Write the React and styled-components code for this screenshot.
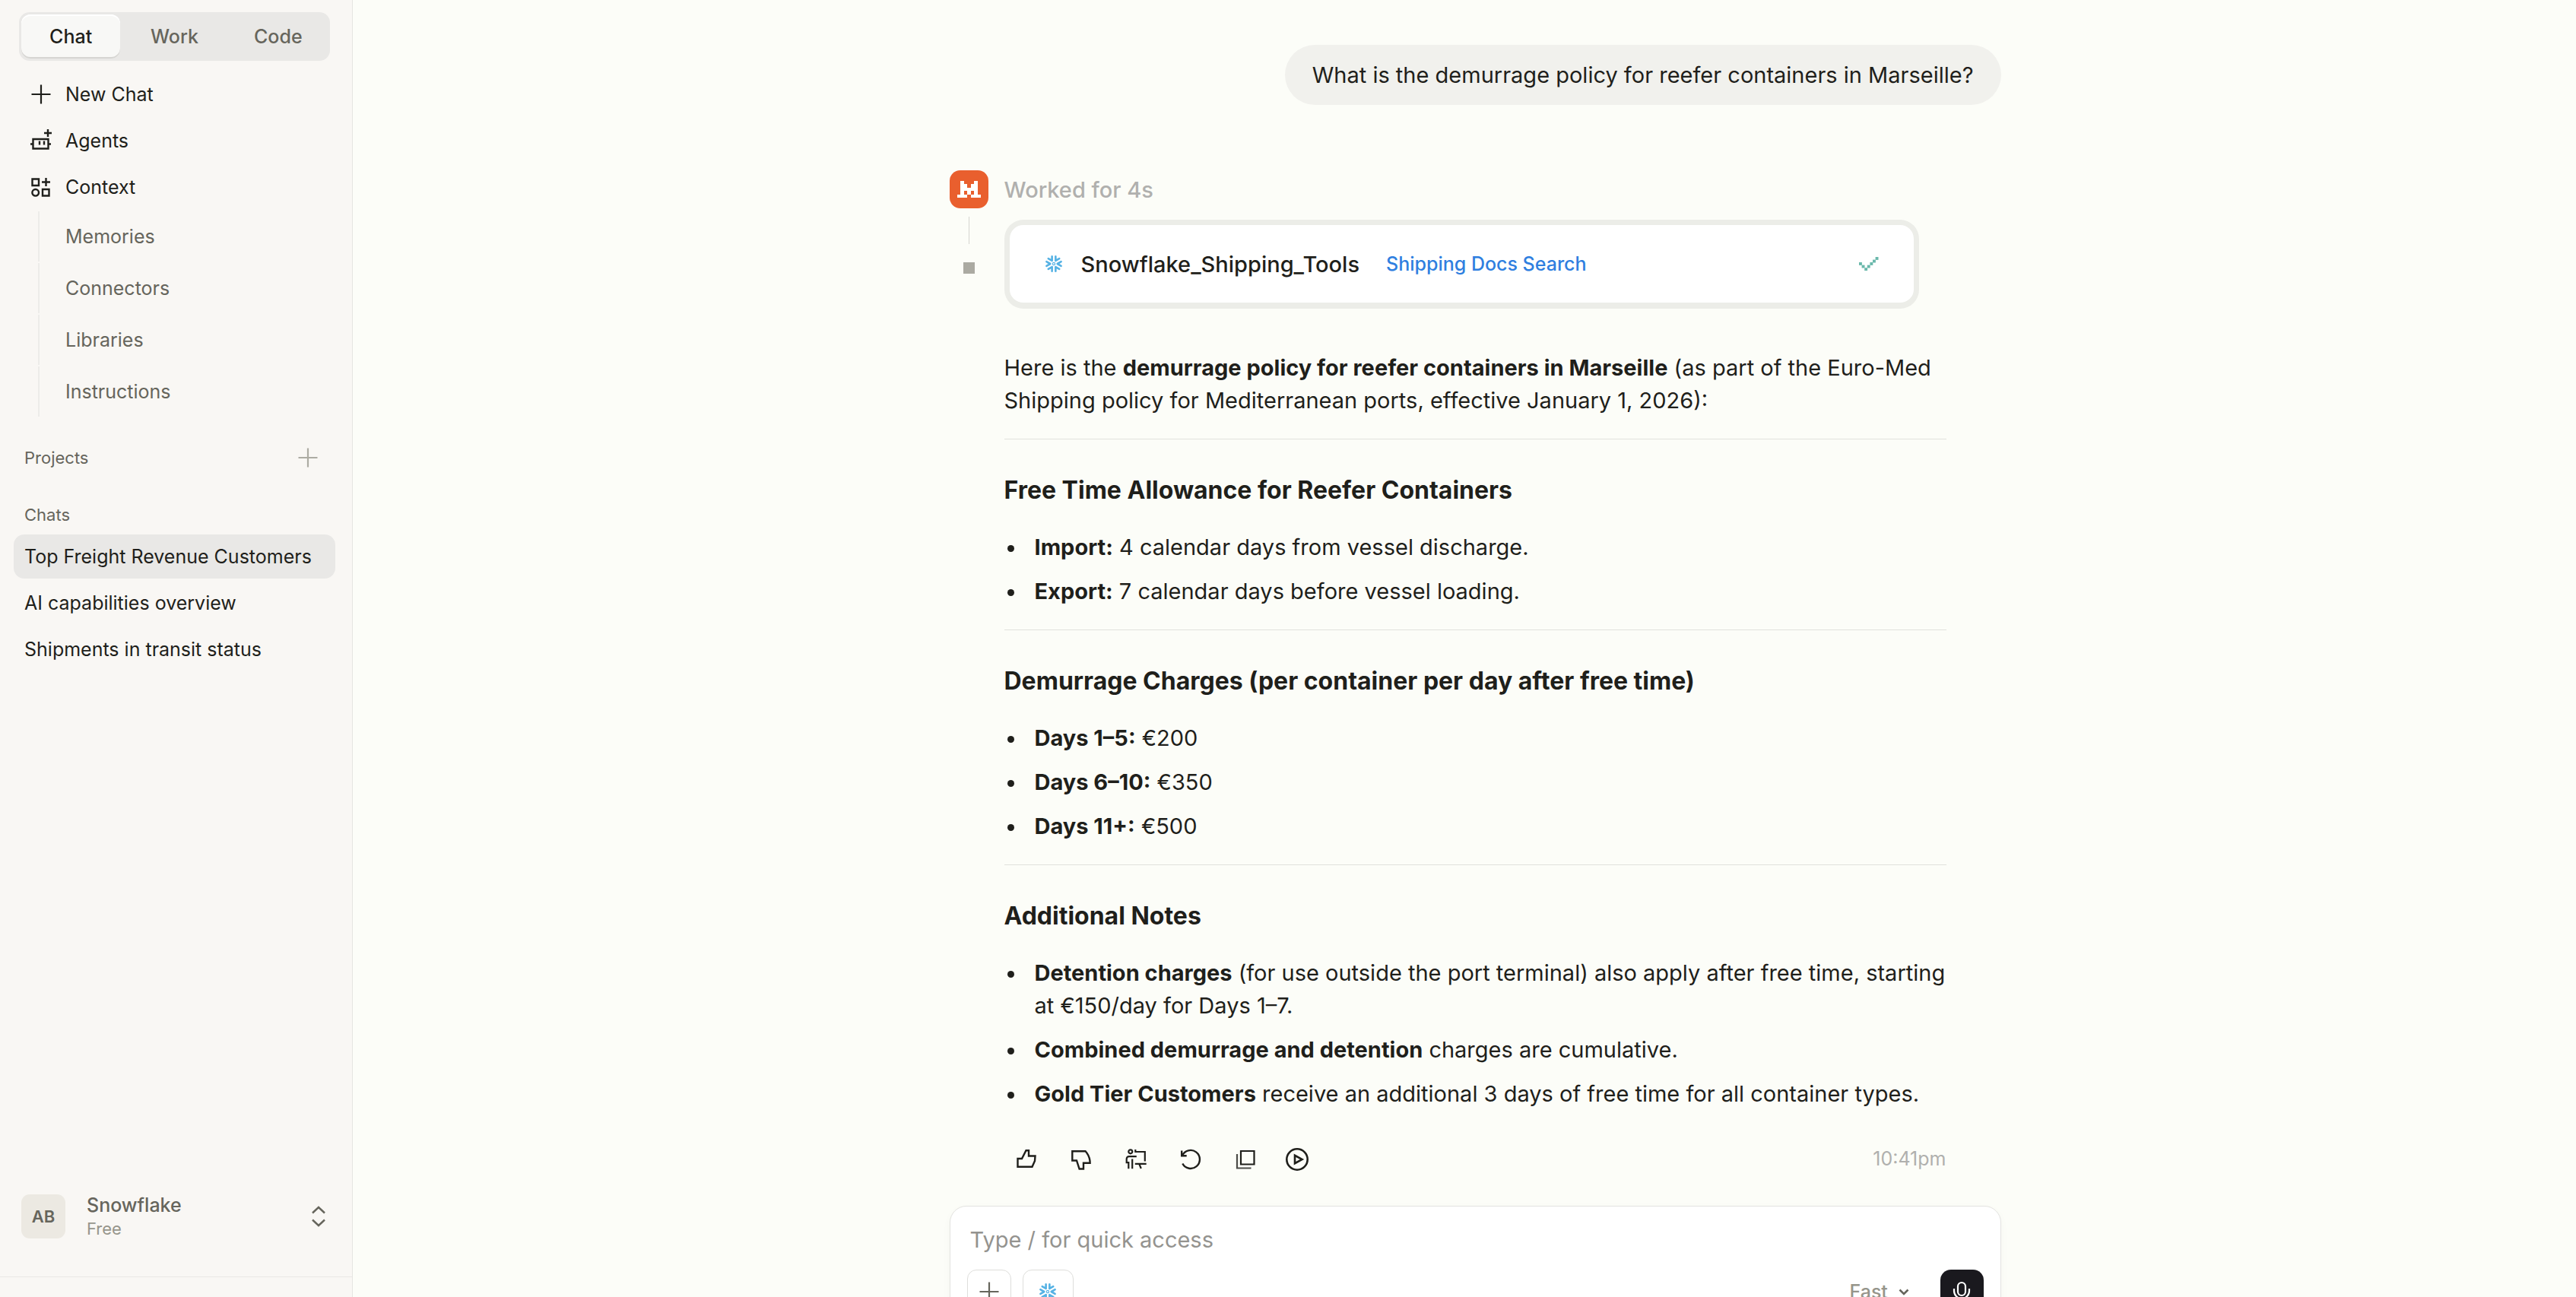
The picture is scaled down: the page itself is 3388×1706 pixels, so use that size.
import React from 'react'
import styled, { createGlobalStyle } from 'styled-components'

const GlobalStyle = createGlobalStyle`
    * {
        box-sizing: border-box;
    }
    body {
        margin: 0;
        background: #fcfdf8;
        font-family: Inter, "Liberation Sans", sans-serif;
        font-optical-sizing: none;
        color: #1f1f1b;
        overflow: hidden;
        -webkit-font-smoothing: antialiased;
    }
    button, input, select {
        font: inherit;
        color: inherit;
        font-optical-sizing: inherit;
    }
    button {
        border: 0;
        padding: 0;
        background: none;
        cursor: pointer;
    }
    a {
        color: inherit;
        text-decoration: none;
    }
`

const Page = styled.div`
    display: flex;
    height: 100vh;
    overflow: hidden;
`

/* ---------- sidebar ---------- */

const Sidebar = styled.aside`
    width: 464px;
    flex-shrink: 0;
    display: flex;
    flex-direction: column;
    background: #f9f7f4;
    border-right: 1px solid #e6e5e2;
    font-size: 25px;
    line-height: 36px;
`

const Modes = styled.div`
    display: grid;
    grid-template-columns: repeat(3, 1fr);
    gap: 6px;
    height: 64px;
    margin: 16px 29px 0 25px;
    padding: 3px;
    border-radius: 14px;
    background: #e9e8e6;
`

const Mode = styled.button`
    border-radius: 12px;
    font-weight: 500;
    color: ${({ $active }) => ($active ? '#1f1f1b' : '#66655c')};
    background: ${({ $active }) => ($active ? '#f8f8f6' : 'transparent')};
    box-shadow: ${({ $active }) => ($active ? 'inset 0 2px 0 #ffffff, inset 0 -2px 0 #d6d5d2' : 'none')};
`

const Nav = styled.nav`
    display: flex;
    flex-direction: column;
    gap: 3px;
    padding: 15px 22px 0 18px;
`

const NavItem = styled.a`
    display: flex;
    align-items: center;
    height: 58px;
    padding: 0 14px;
    border-radius: 14px;
    background: ${({ $active }) => ($active ? '#e9e8e6' : 'transparent')};
    white-space: nowrap;
    svg {
        margin: 0 14px 0 4px;
    }
`

const SubNav = styled.div`
    display: flex;
    flex-direction: column;
    gap: 2px;
    padding: 3px 22px 0 50px;
`

const SubItem = styled.a`
    display: flex;
    align-items: center;
    height: 66px;
    padding-left: 34px;
    border-left: 2px solid #edece9;
    color: #66655c;
`

const SectionTitle = styled.div`
    display: flex;
    align-items: center;
    justify-content: space-between;
    height: 36px;
    margin-top: ${({ $top }) => $top}px;
    padding: 0 40px 0 32px;
    font-size: 22px;
    color: #66655c;
    button {
        display: flex;
        color: #adaca3;
    }
`

const ChatList = styled(Nav)`
    padding-top: 8px;
`

const Account = styled.button`
    display: flex;
    align-items: center;
    gap: 28px;
    margin-top: auto;
    padding: 0 28px 48px 28px;
    text-align: left;
    color: #66655c;
    svg {
        margin-left: auto;
    }
`

const Avatar = styled.span`
    display: grid;
    place-items: center;
    width: 58px;
    height: 58px;
    border-radius: 11px;
    background: #ece9e2;
    font-size: 22px;
    font-weight: 600;
`

const AccountText = styled.span`
    display: flex;
    flex-direction: column;
    font-weight: 500;
    line-height: 32px;
    small {
        font-size: 22px;
        font-weight: 400;
        line-height: 30px;
        color: #96958b;
    }
`

const SidebarFoot = styled.div`
    height: 27px;
    border-top: 1px solid #e9e8e5;
`

/* ---------- conversation ---------- */

const Main = styled.main`
    flex: 1;
    display: flex;
    justify-content: center;
    padding-left: 28px;
    font-size: 29px;
    line-height: 43px;
`

const Column = styled.div`
    width: 1383px;
    display: flex;
    flex-direction: column;
`

const Question = styled.p`
    align-self: flex-end;
    margin: 59px 0 0;
    padding: 18px 36px;
    border-radius: 40px;
    background: #f1f1ed;
`

const Answer = styled.article`
    display: grid;
    grid-template-columns: 51px 1fr;
    column-gap: 21px;
    margin-top: 86px;
`

const Rail = styled.div`
    display: flex;
    flex-direction: column;
    align-items: center;
`

const Logo = styled.span`
    display: grid;
    place-items: center;
    width: 51px;
    height: 50px;
    border-radius: 14px;
    background: #e95f2e;
`

const RailLine = styled.span`
    width: 1px;
    height: 36px;
    margin: 11px 0 24px;
    background: #d5d5d0;
`

const RailDot = styled.span`
    width: 15px;
    height: 15px;
    background: #abaaa2;
`

const Body = styled.div`
    padding-right: 72px;
`

const Status = styled.div`
    padding-top: 4px;
    font-weight: 500;
    color: #b0b0ae;
`

const ToolCard = styled.div`
    display: flex;
    align-items: center;
    height: 117px;
    margin: 18px 36px 0 0;
    padding: 0 46px;
    border: 7px solid #ecede8;
    border-bottom-width: 8px;
    border-radius: 25px;
    background: #ffffff;
    font-weight: 500;
    svg:last-child {
        margin-left: auto;
    }
`

const ToolName = styled.span`
    margin: 0 35px 0 24px;
`

const ToolLink = styled.a`
    font-size: 25px;
    color: #2f7fe0;
`

const Prose = styled.div`
    margin-top: 56px;
    p {
        margin: 0;
    }
    hr {
        height: 1px;
        margin: 29px 0 43px;
        border: 0;
        background: #e1e2dd;
    }
    h3 {
        margin: 0 0 29px;
        font-size: 32px;
        line-height: 48px;
        font-weight: 700;
    }
    strong {
        font-weight: 700;
    }
`

const List = styled.ul`
    display: flex;
    flex-direction: column;
    gap: 15px;
    margin: 0;
    padding: 0;
    list-style: none;
`

const ListItem = styled.li`
    display: flex;
    &::before {
        content: '';
        flex-shrink: 0;
        width: 9px;
        height: 9px;
        margin: 19px 27px 0 4px;
        border-radius: 50%;
        background: currentColor;
    }
`

const Actions = styled.div`
    display: flex;
    align-items: center;
    gap: 36px;
    margin-top: 43px;
    padding-left: 11px;
    time {
        margin-left: auto;
        font-size: 25px;
        color: #b0b0ae;
    }
`

const Action = styled.button`
    display: flex;
    justify-content: center;
    width: ${({ $narrow }) => ($narrow ? 28 : 36)}px;
    svg {
        flex-shrink: 0;
    }
`

/* ---------- composer ---------- */

const Composer = styled.form`
    flex-shrink: 0;
    height: 240px;
    margin-top: 40px;
    padding: 21px 22px;
    border: 1px solid #e3e3e0;
    border-radius: 22px;
    background: #ffffff;
    box-shadow: 0 4px 12px rgba(0, 0, 0, 0.03);
`

const Prompt = styled.input`
    display: block;
    width: 100%;
    height: 44px;
    padding: 0 4px;
    border: 0;
    outline: 0;
    background: none;
    &::placeholder {
        color: #94938f;
        opacity: 1;
    }
`

const Tools = styled.div`
    display: flex;
    align-items: center;
    gap: 15px;
    margin-top: 18px;
`

const ToolButton = styled.button`
    display: grid;
    place-items: center;
    width: ${({ $wide }) => ($wide ? 67 : 58)}px;
    height: 58px;
    border: 1px solid #dededb;
    border-radius: 12px;
    color: #66655c;
`

const Speed = styled.label`
    display: flex;
    align-items: center;
    gap: 12px;
    margin-left: auto;
    margin-right: 25px;
    color: #66655c;
    select {
        appearance: none;
        border: 0;
        background: none;
        font-size: 25px;
        font-weight: 500;
        color: #96958b;
    }
`

const Mic = styled.button`
    display: grid;
    place-items: center;
    width: 57px;
    height: 58px;
    border-radius: 14px;
    background: #1a191e;
    color: #ffffff;
`

/* ---------- icons ---------- */

const Icon = ({ size = 36, stroke = 2, children }) => (
    <svg width={size} height={size} viewBox={`0 0 ${size} ${size}`} fill="none" stroke="currentColor" strokeWidth={stroke} aria-hidden="true">
        {children}
    </svg>
)

const PlusIcon = () => (
    <Icon stroke={2.2}>
        <path d="M18 5.500v25M5.500 18h25" />
    </Icon>
)

const AgentsIcon = () => (
    <Icon stroke={2.4}>
        <path d="M7.500 16h20v12.500h-20zM4 22.500h3M28 22.500h3M16 18.500v5M22 18.500v5M27 3v10M22 8h10" />
    </Icon>
)

const ContextIcon = () => (
    <Icon stroke={2.4}>
        <path d="M6.500 7.500h8.500v8.500h-8.500zM20 21h8.500v8.500h-8.500zM24.500 6v11M19 11.500h11" />
        <circle cx="10.700" cy="25.300" r="4.300" />
    </Icon>
)

const SnowflakeIcon = () => (
    <svg width="24" height="24" viewBox="0 0 24 24" fill="none" stroke="#56b2e4" aria-hidden="true">
        {[0, 60, 120, 180, 240, 300].map((angle) => (
            <path key={angle} d="M21.600 9.200 16.700 12l4.900 2.800" strokeWidth="2.600" strokeLinecap="round" strokeLinejoin="round" transform={`rotate(${angle} 12 12)`} />
        ))}
        <circle cx="12" cy="12" r="1.600" strokeWidth="1.200" />
    </svg>
)

const checkDots = [[0, 7], [3.6, 10.6], [7.2, 14.2], [10.8, 10.6], [14.4, 7], [18, 3.6], [21.6, 0]]

const CheckIcon = () => (
    <svg width="26" height="18" viewBox="0 0 26 18" fill="#6ab8ab" aria-hidden="true">
        {checkDots.map(([x, y]) => (
            <rect key={x} x={x} y={y} width="3.900" height="3.900" />
        ))}
    </svg>
)

const logoRows = ['.#...#.', '.##.##.', '.#####.', '.#.#.#.', '###.###']

const LogoIcon = () => (
    <svg width="31" height="22" viewBox="0 0 7 5" preserveAspectRatio="none" fill="#ffffff" shapeRendering="crispEdges" aria-hidden="true">
        {logoRows.map((row, y) =>
            [...row].map((cell, x) => cell === '#' && <rect key={`${x}-${y}`} x={x} y={y} width="1" height="1" />)
        )}
    </svg>
)

const UpDownIcon = () => (
    <Icon size={32} stroke={2.4}>
        <path d="M8 11.500 16 4l8 7.500M8 20.500l8 7.500 8-7.500" />
    </Icon>
)

const ThumbUpIcon = () => (
    <Icon size={28} stroke={2.4}>
        <path d="M2.500 13h5.500l5.500-10.800h3.500v7.300h8.500l-.5 6.500-3.500 7.800h-19z" />
    </Icon>
)

const ThumbDownIcon = () => (
    <Icon size={28} stroke={2.4}>
        <path d="M2.300 3.200h17.300q6 6.500 6 15.600h-8.600v7.700h-5.400l-3.600-11h-5.700z" />
    </Icon>
)

const TeachIcon = () => (
    <Icon size={28} stroke={2.2}>
        <circle cx="6.800" cy="3.800" r="2.500" />
        <path d="M13.300 1v4M13.300 4h12.500v12.500M14.800 10.200H5q-3.300 0-3.300 3.300v4.700h2.600v8M9.200 13.500v12.700M12.800 19.800h14.900M18.200 19.800l2.600 6.200" />
    </Icon>
)

const RetryIcon = () => (
    <Icon size={28} stroke={2.4}>
        <path d="M2.200 2.500v6.800h6.500M3 9a12 12 0 1 1 .3 10.500" />
    </Icon>
)

const CopyIcon = () => (
    <Icon size={28} stroke={2.2}>
        <path d="M8 3h17.500v17.500h-17.500z" />
        <path d="M3 7v18.500h18.500" opacity="0.800" />
    </Icon>
)

const PlayIcon = () => (
    <Icon size={32} stroke={2.6}>
        <circle cx="16" cy="16" r="13.700" />
        <path d="M13 10.800v10.400l9.500-5.200z" />
    </Icon>
)

const ChevronIcon = () => (
    <Icon size={16} stroke={2.6}>
        <path d="m2.500 5.500 5.500 5.500 5.500-5.500" />
    </Icon>
)

const MicIcon = () => (
    <Icon size={32} stroke={2.2}>
        <rect x="11" y="4" width="10" height="17" rx="5" />
        <path d="M6 12v3a10 10 0 0 0 20 0v-3M16 25v5" />
    </Icon>
)

/* ---------- page ---------- */

const contextLinks = ['Memories', 'Connectors', 'Libraries', 'Instructions']
const chats = ['Top Freight Revenue Customers', 'AI capabilities overview', 'Shipments in transit status']

const actions = [
    ['Like', ThumbUpIcon],
    ['Dislike', ThumbDownIcon],
    ['Teach', TeachIcon],
    ['Retry', RetryIcon],
    ['Copy', CopyIcon],
    ['Play', PlayIcon],
]

const Bullet = ({ term, children }) => (
    <ListItem>
        <span><strong>{term}</strong> {children}</span>
    </ListItem>
)

export default function App() {
    return (
        <Page>
            <GlobalStyle />
            <Sidebar>
                <Modes>
                    <Mode $active>Chat</Mode>
                    <Mode>Work</Mode>
                    <Mode>Code</Mode>
                </Modes>
                <Nav>
                    <NavItem href="#new"><PlusIcon />New Chat</NavItem>
                    <NavItem href="#agents"><AgentsIcon />Agents</NavItem>
                    <NavItem href="#context"><ContextIcon />Context</NavItem>
                </Nav>
                <SubNav>
                    {contextLinks.map((name) => (
                        <SubItem key={name} href="#context">{name}</SubItem>
                    ))}
                </SubNav>
                <SectionTitle $top={36}>
                    Projects
                    <button aria-label="New project"><PlusIcon /></button>
                </SectionTitle>
                <SectionTitle $top={39}>Chats</SectionTitle>
                <ChatList>
                    {chats.map((name, i) => (
                        <NavItem key={name} href="#chat" $active={i === 0}>{name}</NavItem>
                    ))}
                </ChatList>
                <Account>
                    <Avatar>AB</Avatar>
                    <AccountText>
                        Snowflake
                        <small>Free</small>
                    </AccountText>
                    <UpDownIcon />
                </Account>
                <SidebarFoot />
            </Sidebar>

            <Main>
                <Column>
                    <Question>What is the demurrage policy for reefer containers in Marseille?</Question>
                    <Answer>
                        <Rail>
                            <Logo><LogoIcon /></Logo>
                            <RailLine />
                            <RailDot />
                        </Rail>
                        <Body>
                            <Status>Worked for 4s</Status>
                            <ToolCard>
                                <SnowflakeIcon />
                                <ToolName>Snowflake_Shipping_Tools</ToolName>
                                <ToolLink href="#docs">Shipping Docs Search</ToolLink>
                                <CheckIcon />
                            </ToolCard>
                            <Prose>
                                <p>
                                    Here is the <strong>demurrage policy for reefer containers in Marseille</strong> (as part of the Euro-Med
                                    Shipping policy for Mediterranean ports, effective January 1, 2026):
                                </p>
                                <hr />
                                <h3>Free Time Allowance for Reefer Containers</h3>
                                <List>
                                    <Bullet term="Import:">4 calendar days from vessel discharge.</Bullet>
                                    <Bullet term="Export:">7 calendar days before vessel loading.</Bullet>
                                </List>
                                <hr />
                                <h3>Demurrage Charges (per container per day after free time)</h3>
                                <List>
                                    <Bullet term="Days 1–5:">€200</Bullet>
                                    <Bullet term="Days 6–10:">€350</Bullet>
                                    <Bullet term="Days 11+:">€500</Bullet>
                                </List>
                                <hr />
                                <h3>Additional Notes</h3>
                                <List>
                                    <Bullet term="Detention charges">(for use outside the port terminal) also apply after free time, starting at €150/day for Days 1–7.</Bullet>
                                    <Bullet term="Combined demurrage and detention">charges are cumulative.</Bullet>
                                    <Bullet term="Gold Tier Customers">receive an additional 3 days of free time for all container types.</Bullet>
                                </List>
                            </Prose>
                            <Actions>
                                {actions.map(([label, Glyph]) => (
                                    <Action key={label} aria-label={label} $narrow={label === 'Play'}><Glyph /></Action>
                                ))}
                                <time>10:41pm</time>
                            </Actions>
                        </Body>
                    </Answer>
                    <Composer>
                        <Prompt aria-label="Message" placeholder="Type / for quick access" />
                        <Tools>
                            <ToolButton type="button" aria-label="Add"><PlusIcon /></ToolButton>
                            <ToolButton type="button" aria-label="Snowflake" $wide><SnowflakeIcon /></ToolButton>
                            <Speed>
                                <select aria-label="Speed">
                                    <option>Fast</option>
                                </select>
                                <ChevronIcon />
                            </Speed>
                            <Mic type="button" aria-label="Dictate"><MicIcon /></Mic>
                        </Tools>
                    </Composer>
                </Column>
            </Main>
        </Page>
    )
}
